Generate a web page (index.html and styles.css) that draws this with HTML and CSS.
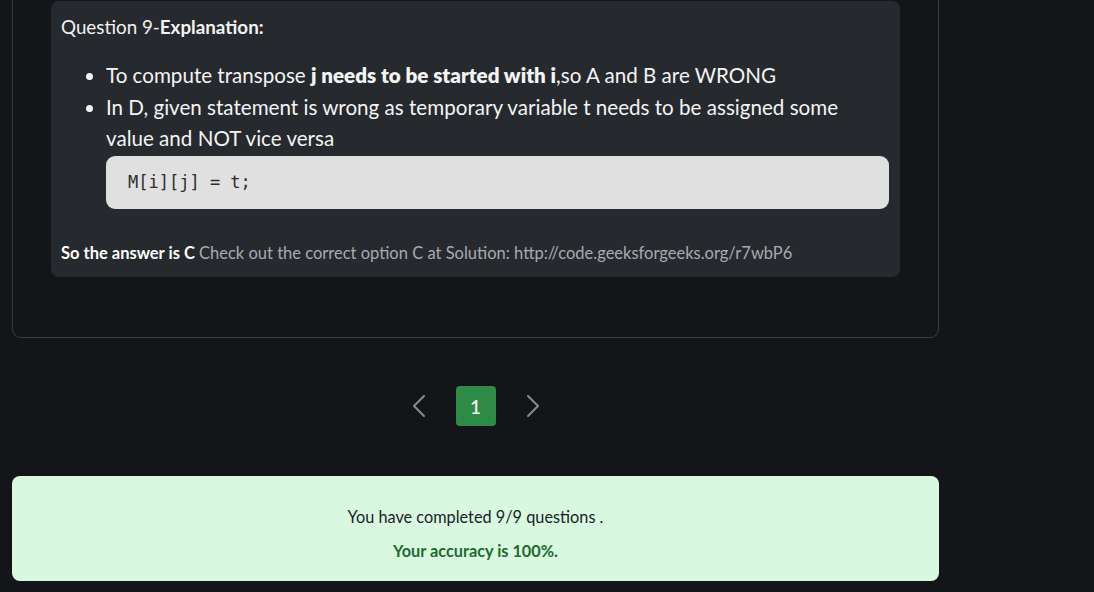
FILE: index.html
```html
<!DOCTYPE html>
<html lang="en">
<head>
<meta charset="utf-8">
<title>Quiz explanation</title>
<link rel="stylesheet" href="styles.css">
</head>
<body>
<main class="page">
  <section class="quiz-card">
    <div class="explanation">
      <p class="exp-title">Question 9-<strong>Explanation:</strong></p>
      <ul class="exp-list">
        <li>To compute transpose <strong>j needs to be started with i</strong>,so A and B are WRONG</li>
        <li>In D, given statement is wrong as temporary variable t needs to be assigned some value and NOT vice versa
          <pre class="code">M[i][j] = t;</pre>
        </li>
      </ul>
      <p class="answer"><strong>So the answer is C</strong> Check out the correct option C at Solution: http://code.geeksforgeeks.org/r7wbP6</p>
    </div>
  </section>

  <nav class="pager" aria-label="Pagination">
    <button class="pager-arrow" aria-label="Previous page">
      <svg width="14" height="24" viewBox="0 0 14 24"><path d="M12 2 L2 12 L12 22" fill="none" stroke="currentColor" stroke-width="2" stroke-linecap="round" stroke-linejoin="round"/></svg>
    </button>
    <span class="pager-page">1</span>
    <button class="pager-arrow" aria-label="Next page">
      <svg width="14" height="24" viewBox="0 0 14 24"><path d="M2 2 L12 12 L2 22" fill="none" stroke="currentColor" stroke-width="2" stroke-linecap="round" stroke-linejoin="round"/></svg>
    </button>
  </nav>

  <section class="result">
    <p class="result-line">You have completed 9/9 questions .</p>
    <p class="result-accuracy">Your accuracy is 100%.</p>
  </section>
</main>
</body>
</html>
```

FILE: styles.css
```css
html, body {
  margin: 0;
  padding: 0;
  background: #141519;
}

body {
  font-family: Lato, "Open Sans", sans-serif;
  color: #e8e8e8;
}

.page {
  width: 927px;
  margin-left: 12px;
}

.quiz-card {
  border: 1px solid #3b3c40;
  border-top: 0;
  border-radius: 0 0 9px 9px;
  padding: 1px 38px 60px 38px;
}

.explanation {
  background: #26292d;
  border-radius: 8px;
  padding: 12px 11px 12px 10px;
  width: 849px;
  box-sizing: border-box;
}

.exp-title {
  margin: 0;
  font-family: Lato, sans-serif;
  font-size: 18.8px;
  line-height: 27px;
  color: #f2f2f2;
}

.exp-title strong {
  font-weight: 700;
}

.exp-list {
  margin: 20px 0 0 0;
  padding-left: 45px;
  font-family: Lato, sans-serif;
  font-size: 20.6px;
  line-height: 31.5px;
  color: #f4f4f4;
}

.exp-list strong {
  font-weight: 800;
}

.code {
  margin: 1.5px 0 0 0;
  background: #e0e0e0;
  border-radius: 9px;
  padding: 16px 22px;
  font-family: "DejaVu Sans Mono", "Liberation Mono", monospace;
  font-size: 17px;
  line-height: 21px;
  color: #2e2e2e;
}

.answer {
  margin: 32px 0 0 0;
  font-family: Lato, sans-serif;
  font-size: 16.5px;
  line-height: 24px;
  color: #a9abae;
}

.answer strong {
  color: #ffffff;
  font-weight: 700;
}

.pager {
  margin-top: 48px;
  display: flex;
  justify-content: center;
  align-items: center;
  gap: 17px;
}

.pager-arrow {
  width: 40px;
  height: 40px;
  display: flex;
  align-items: center;
  justify-content: center;
  background: none;
  border: 0;
  padding: 0;
  color: #8a8b8e;
}

.pager-page {
  width: 40px;
  height: 40px;
  display: flex;
  align-items: center;
  justify-content: center;
  background: #2e8b45;
  border-radius: 4px;
  color: #f0f0f0;
  font-family: Lato, sans-serif;
  font-size: 19px;
  font-weight: 600;
}

.result {
  margin-top: 50px;
  background: #d8f9df;
  border-radius: 8px;
  padding: 29px 0 18px;
  text-align: center;
  font-family: Lato, sans-serif;
  font-size: 16.3px;
  line-height: 24px;
}

.result-line {
  margin: 0;
  color: #1b1d2a;
}

.result-accuracy {
  margin: 10px 0 0 0;
  color: #1e6a30;
  font-weight: 700;
}
```
